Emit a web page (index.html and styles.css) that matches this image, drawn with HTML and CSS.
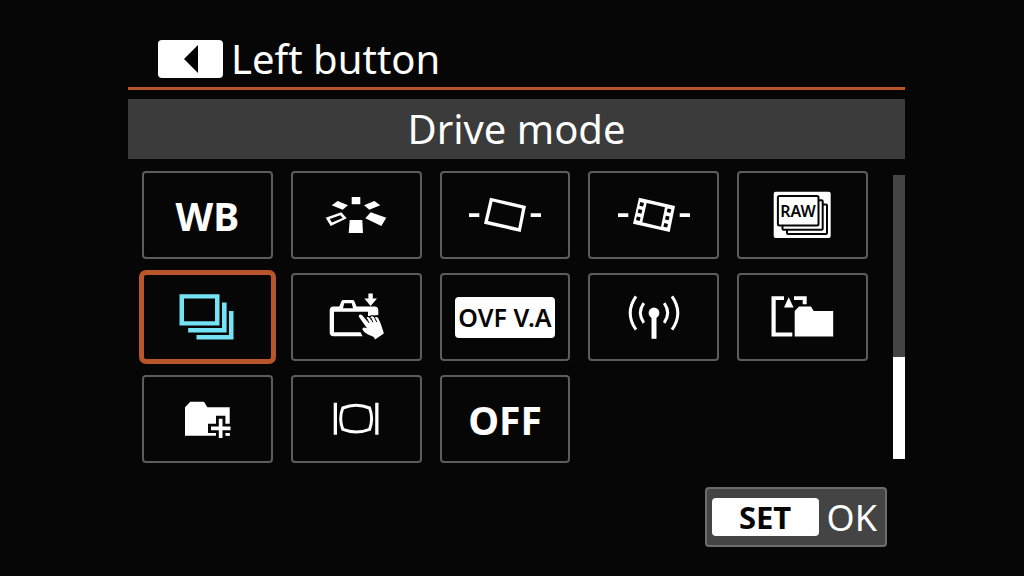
FILE: index.html
```
<!DOCTYPE html>
<html lang="en">
<head>
<meta charset="UTF-8">
<title>Left button</title>
<link rel="stylesheet" href="styles.css">
</head>
<body>
	<main class="screen">
		<header class="header">
			<span class="key">
				<svg width="14" height="28" viewBox="0 0 14 28"><path d="M14 0V28L0 14Z"/></svg>
			</span>
			<h1>Left button</h1>
		</header>
		<h2 class="current">Drive mode</h2>
		<div class="list">
			<div class="options">
				<button class="option">WB</button>
				<button class="option" aria-label="Picture style">
					<svg class="icon" viewBox="0 0 80 60">
						<path d="M35.7 12H44.3V19.3H35.7ZM33.7 35H46.3L47 48H32.7ZM15.7 20.3L21.7 16L32 20.3L26.7 24.7ZM64.3 20.3L58.3 16L48 20.3L53.3 24.7ZM70.3 32.7L54.7 27.3L49.3 33.3L65.3 41Z"/>
						<path fill-rule="evenodd" d="M9.7 32.7L25.3 27.3L30.7 33.3L14.7 41ZM13.7 33.9L16 37.4L26.7 33L24.3 30.2Z"/>
					</svg>
				</button>
				<button class="option" aria-label="Level">
					<svg class="icon" viewBox="0 0 80 60">
						<path d="M4 28.2H14.3V32H4ZM65.7 28.2H76V32H65.7Z"/>
						<path fill-rule="evenodd" d="M25 12.7L61 21L55.7 47L19 38.7ZM27.6 16.6L23 36L53.3 43L57 23.6Z"/>
					</svg>
				</button>
				<button class="option" aria-label="Movie level">
					<svg class="icon" viewBox="0 0 80 60">
						<path d="M4 28.2H14.3V32H4ZM65.7 28.2H76V32H65.7Z"/>
						<path fill-rule="evenodd" d="M25 12.7L61 21L55.7 47L19 38.7ZM32.7 18L28.3 37.3L47 41.7L51 22.3Z"/>
						<g class="hole">
							<rect x="25.8" y="17.4" width="3.8" height="3.8" transform="rotate(13 27.7 19.3)"/>
							<rect x="24.1" y="24.5" width="3.8" height="3.8" transform="rotate(13 26 26.4)"/>
							<rect x="22.4" y="31.8" width="3.8" height="3.8" transform="rotate(13 24.3 33.7)"/>
							<rect x="53.1" y="23.8" width="3.8" height="3.8" transform="rotate(13 55 25.7)"/>
							<rect x="51.4" y="31.1" width="3.8" height="3.8" transform="rotate(13 53.3 33)"/>
							<rect x="49.8" y="38.4" width="3.8" height="3.8" transform="rotate(13 51.7 40.3)"/>
						</g>
					</svg>
				</button>
				<button class="option" aria-label="RAW burst">
					<svg class="icon" viewBox="0 0 80 60">
						<rect x="10.7" y="6.7" width="57" height="46.3" rx="2"/>
						<g class="ink">
							<rect x="14.9" y="10.9" width="40.6" height="29.6" rx="1.5"/>
							<path d="M56 15.2H58.7Q59.7 15.2 59.7 16.2V43.8Q59.7 44.8 58.7 44.8H20.5Q19.5 44.8 19.5 43.8V41M60 19.4H63Q64 19.4 64 20.4V48Q64 49 63 49H25Q24 49 24 48V45"/>
						</g>
						<text class="raw" x="35" y="32">RAW</text>
					</svg>
				</button>
				<button class="option selected" aria-label="Drive mode">
					<svg class="icon" viewBox="0 0 80 60">
						<path fill-rule="evenodd" d="M12.5 7.3H52.5V38.5H12.5ZM17 11.5V34.3H48V11.5Z"/>
						<path d="M55 15.5H59.6V45.5H21.2V41H55ZM62 24H66.5V52.5H29.5V48H62Z"/>
					</svg>
				</button>
				<button class="option" aria-label="Touch shutter">
					<svg class="icon" viewBox="0 0 80 60">
						<path fill-rule="evenodd" d="M17.5 19.5H23.3L25.5 14Q26.2 13 27.5 13H36.5Q37.8 13 38.3 14L40.5 19.5H58.5Q62.3 19.5 62.3 23.5V28L52 29V24.8H18V45.2H44.5L46.5 49.2H17.5Q13.7 49.2 13.7 45.5V23.5Q13.7 19.5 17.5 19.5ZM28.2 16.3L27 21.3H37L35.8 16.3Z"/>
						<path d="M52.4 6.5H56.8V11.5H61L54.6 19L48.4 11.5H52.4Z"/>
						<path class="outlined" d="M43 30Q42.3 27.8 44.5 27.6Q46.3 28 47.2 29.6L52 35.2L50.6 31.2Q51.3 29 53.7 31L55.3 34L54.6 30.2Q56 28.2 58.3 30.8L59.7 34L58.9 30.6Q60.4 29 62.3 31.3L63.4 33.8Q64 35 65 37.5L67.3 44.5L67.8 46.6L59 52.5L57.8 50L51.5 47.3Q48 45.5 46.4 42.4Q46.3 40.2 49 40.7L51 41.2Z"/>
						<path class="crease" d="M50.8 31.5L53 36M55 31L56.8 35.2M59.2 31.5L60.7 35"/>
					</svg>
				</button>
				<button class="option"><span class="plate">OVF V.A</span></button>
				<button class="option" aria-label="Wireless">
					<svg class="icon" viewBox="0 0 80 60">
						<circle cx="40" cy="26" r="5.4"/>
						<path d="M37.5 26H42.5V51.8H37.5Z"/>
						<path class="wave" d="M29.8 16.2Q22.8 26 29.8 35.8M22 9.3Q10.4 26 22 42.7M50.2 16.2Q57.2 26 50.2 35.8M58 9.3Q69.6 26 58 42.7"/>
					</svg>
				</button>
				<button class="option" aria-label="Switch folder">
					<svg class="icon" viewBox="0 0 80 60">
						<path d="M8.5 9.2H21V13H12.7V45.6H29.3V49.4H8.5ZM31 9.2H43.7V17.2H39.7V13H31ZM25.7 10.2L30.6 20.5H21Z"/>
						<path d="M31.7 24L36 19.5H48L50.7 24H70.2V49.4H31.7Z"/>
					</svg>
				</button>
				<button class="option" aria-label="Create folder">
					<svg class="icon" viewBox="0 0 80 60">
						<path d="M18 18.3L23.3 12.7H37L40.3 18.3H62.7V46.7H18Z"/>
						<path class="hole" d="M49 26.8H58.4V34.7H66V44H58.4V52H49V44H41V34.7H49Z"/>
						<path d="M51.8 29.7H55.5V37.5H63.5V41.2H55.5V49H51.8V41.2H44V37.5H51.8ZM59.5 44.2H62.7V46.7H59.5Z"/>
					</svg>
				</button>
				<button class="option" aria-label="Display">
					<svg class="icon" viewBox="0 0 80 60">
						<path d="M17.7 13.8H21V45.8H17.7ZM59.2 13.8H62.5V45.8H59.2Z"/>
						<path class="wave" d="M26.8 19Q40 13.4 53.6 19Q57.6 29.7 53.6 40.4Q40 45.6 26.8 40.4Q22.6 29.7 26.8 19Z"/>
					</svg>
				</button>
				<button class="option">OFF</button>
			</div>
			<div class="scrollbar"><div class="thumb"></div></div>
		</div>
		<footer class="footer">
			<button class="ok"><span class="set">SET</span>OK</button>
		</footer>
	</main>
</body>
</html>
```
FILE: styles.css
```
body {
	margin: 0;
	background-color: #060606;
	color: white;
	font-family: "Noto Sans", sans-serif;
}

.screen {
	padding: 37px 119px 0 128px;
}

.header {
	display: flex;
	align-items: center;
	gap: 8px;
	padding: 0 30px 6px;
	border-bottom: 3px solid #b8552a;
}

h1, h2 {
	margin: 0;
	font-size: 40px;
	line-height: 44px;
	font-weight: 400;
}

.key {
	display: flex;
	align-items: center;
	justify-content: center;
	width: 65px;
	height: 38px;
	border-radius: 4px;
	background-color: white;
}

.current {
	margin-top: 9px;
	padding: 8px 0;
	background-color: #3b3b3b;
	text-align: center;
}

.list {
	display: flex;
	gap: 25px;
	margin-top: 12px;
	padding-left: 14px;
}

.options {
	flex: 1;
	display: grid;
	grid-template-columns: repeat(5, 1fr);
	gap: 14px 18px;
}

.option {
	display: flex;
	align-items: center;
	justify-content: center;
	height: 88px;
	padding: 0;
	border: 2px solid #5c5c5c;
	border-radius: 4px;
	background-color: #060606;
	color: white;
	font: bold 39px "Noto Sans", sans-serif;
}

.selected {
	border-color: #b8552a;
	box-shadow: 0 0 0 3px #b8552a;
	color: #74e4f4;
}

.icon {
	width: 80px;
	height: 60px;
	fill: currentColor;
}

.hole {
	fill: #060606;
}

.ink {
	fill: none;
	stroke: #060606;
	stroke-width: 2;
}

.raw {
	fill: #060606;
	font-size: 16px;
	font-weight: 600;
	text-anchor: middle;
}

.outlined {
	stroke: #060606;
	stroke-width: 2;
	paint-order: stroke;
}

.crease {
	stroke: #060606;
	stroke-width: 1;
}

.wave {
	fill: none;
	stroke: currentColor;
	stroke-width: 3;
}

.plate {
	padding: 0 3px;
	border-radius: 4px;
	background-color: white;
	color: #060606;
	font-size: 25px;
	font-weight: 600;
	line-height: 41px;
}

.scrollbar {
	display: flex;
	flex-direction: column;
	justify-content: flex-end;
	width: 12px;
	margin: 4px 0;
	background-color: #444;
}

.thumb {
	height: 36%;
	background-color: white;
}

.footer {
	display: flex;
	justify-content: flex-end;
	padding: 24px 18px 0 0;
}

.ok {
	display: flex;
	align-items: center;
	gap: 8px;
	height: 60px;
	padding: 0 8px 0 5px;
	border: 2px solid #6c6c6c;
	border-radius: 4px;
	background-color: #444;
	color: white;
	font: 36px "Noto Sans", sans-serif;
}

.set {
	width: 107px;
	border-radius: 4px;
	background-color: white;
	color: #060606;
	font-size: 31px;
	font-weight: 700;
	line-height: 38px;
}
```
